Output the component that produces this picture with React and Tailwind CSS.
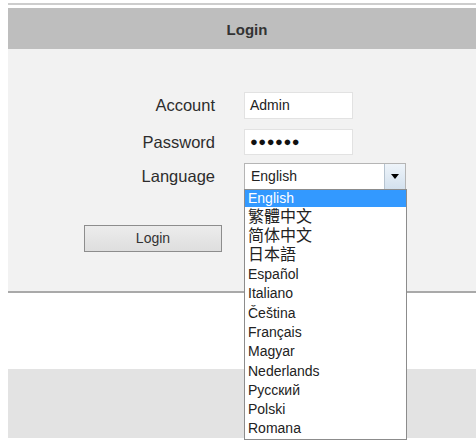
const languages = [
  { label: 'English', active: true },
  { label: '繁體中文', cjk: true },
  { label: '简体中文', cjk: true },
  { label: '日本語', cjk: true },
  { label: 'Español' },
  { label: 'Italiano' },
  { label: 'Čeština' },
  { label: 'Français' },
  { label: 'Magyar' },
  { label: 'Nederlands' },
  { label: 'Русский' },
  { label: 'Polski' },
  { label: 'Romana' },
];

const font = "font-['Liberation_Sans','Noto_Sans_CJK_SC',sans-serif]";

function Field({ label, children }) {
  return (
    <div className="flex items-center">
      <div className="w-[207px] text-right text-[16.5px] text-[#2d2d2d]">{label}</div>
      <div className="ml-[29px]">{children}</div>
    </div>
  );
}

export default function App() {
  return (
    <div className={`w-full h-[442px] bg-white pl-2 overflow-hidden ${font}`}>
      <div className="mt-[3px] h-[2px] bg-[#cdcdcd]" />
      <div className="mt-[3px] h-[41px] bg-[#bebebe] flex items-center justify-center pt-[3px]">
        <span className="text-[15px] font-bold text-[#333] ml-[10px]">Login</span>
      </div>

      {/* form panel */}
      <div className="h-[244px] bg-[#f2f2f2] border-b-2 border-[#a9a9a9] pt-[43px]">
        <Field label="Account">
          <div className="w-[109px] h-[27px] bg-white border border-[#e2e2e2] flex items-center px-[5px] text-[14px] text-[#222]">
            Admin
          </div>
        </Field>
        <div className="mt-[10px]">
          <Field label="Password">
            <div className="w-[109px] h-[26px] bg-white border border-[#e2e2e2] flex items-center px-[5px] text-[13px] text-[#111] tracking-[0.5px]">
              ●●●●●●
            </div>
          </Field>
        </div>
        <div className="mt-[8px]">
          <Field label="Language">
            <div className="relative w-[162px] h-[27px] bg-white border border-[#b5b5b5] flex items-center">
              <span className="pl-[6px] text-[14px] text-[#222] flex-1">English</span>
              <div className="w-[21px] h-[25px] border-l border-[#b7c4d0] bg-gradient-to-b from-[#eef4fa] to-[#d3e1ee] flex items-center justify-center">
                <div className="w-0 h-0 border-l-[4px] border-r-[4px] border-t-[5px] border-l-transparent border-r-transparent border-t-black" />
              </div>
              <div className="absolute left-[-1px] top-[25px] w-[163px] bg-white border border-[#8c8c8c] z-10">
                {languages.map((l) => (
                  <div
                    key={l.label}
                    className={
                      l.active
                        ? 'h-[17px] bg-[#3399ff] text-white text-[14px] pl-[3px] flex items-center'
                        : `h-[19.3px] text-[#222] pl-[3px] flex items-center ${l.cjk ? 'text-[16px]' : 'text-[14px]'}`
                    }
                  >
                    {l.label}
                  </div>
                ))}
              </div>
            </div>
          </Field>
        </div>
        <div className="mt-[35px] ml-[76px]">
          <button className="w-[138px] h-[27px] border border-[#8d8d8d] bg-gradient-to-b from-[#ececec] to-[#dedede] text-[14px] text-[#333]">
            Login
          </button>
        </div>
      </div>

      <div className="mt-[76px] h-[69px] bg-[#e3e3e3]" />
    </div>
  );
}
